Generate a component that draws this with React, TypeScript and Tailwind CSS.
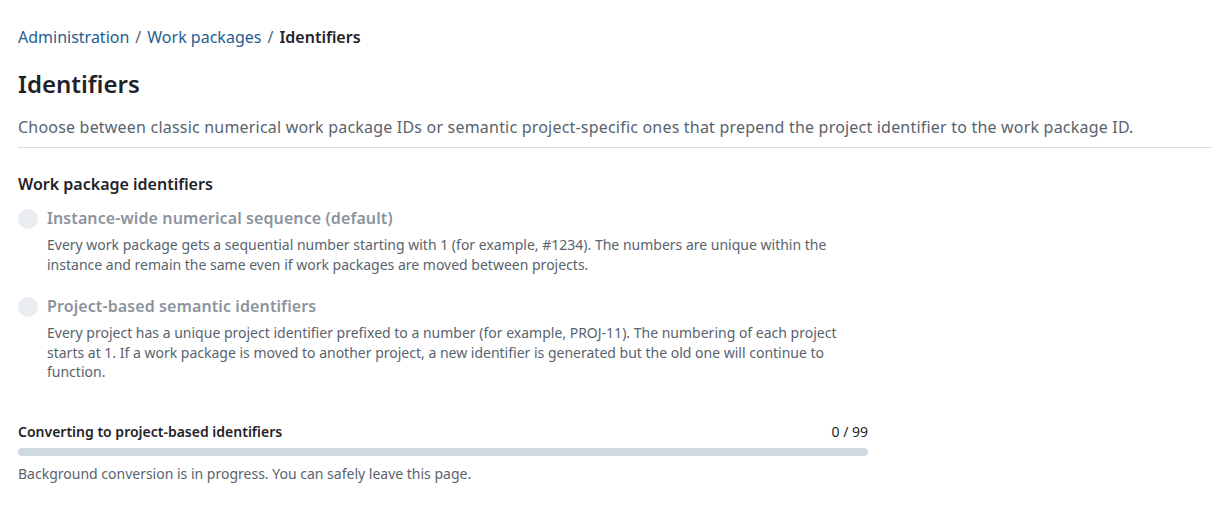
import React from "react";

function Radio({ title, children }: { title: string; children: React.ReactNode }) {
  return (
    <div className="flex gap-[9px]">
      <div className="mt-[3px] h-[20px] w-[20px] shrink-0 rounded-full bg-[#eaedf1]" />
      <div className="flex flex-col">
        <div className="text-[16px] font-semibold leading-[24px] tracking-[0.1px] text-[#8b949e]">{title}</div>
        <div className="mt-[5px] max-w-[800px] text-[14px] leading-[19.5px] text-[#59636e]">{children}</div>
      </div>
    </div>
  );
}

export default function App() {
  return (
    <div
      className="min-h-screen bg-white pl-[18px] pr-[19px] pt-[25px] text-[#1f2328]"
      style={{ fontFamily: '"Noto Sans", "Open Sans", sans-serif' }}
    >
      <nav className="flex items-center text-[16px] leading-[24px]">
        <a className="text-[#1f6092]">Administration</a>
        <span className="mx-[6px] text-[#59636e]">/</span>
        <a className="text-[#1f6092]">Work packages</a>
        <span className="mx-[6px] text-[#59636e]">/</span>
        <span className="font-semibold text-[#1f2328]">Identifiers</span>
      </nav>
      <h1 className="mt-[19px] text-[24px] font-semibold leading-[32px]">Identifiers</h1>
      <p className="mt-[15px] text-[16px] leading-[24px] tracking-[0.2px] text-[#59636e]">
        Choose between classic numerical work package IDs or semantic project-specific ones that prepend the project identifier to the work package ID.
      </p>
      <div className="mt-[8px] border-b border-[#d8dee4]" />

      <div className="max-w-[850px]">
        <h2 className="mt-[24px] text-[16px] font-semibold leading-[24px]">Work package identifiers</h2>
        <div className="mt-[10px] flex flex-col gap-[20px]">
          <Radio title="Instance-wide numerical sequence (default)">
            Every work package gets a sequential number starting with 1 (for example, #1234). The numbers are unique within the instance and remain the same even if work packages are moved between projects.
          </Radio>
          <Radio title="Project-based semantic identifiers">
            Every project has a unique project identifier prefixed to a number (for example, PROJ-11). The numbering of each project starts at 1. If a work package is moved to another project, a new identifier is generated but the old one will continue to function.
          </Radio>
        </div>

        <div className="mt-[40px]">
          <div className="flex items-center justify-between text-[14px] leading-[20px]">
            <span className="font-semibold">Converting to project-based identifiers</span>
            <span>0 / 99</span>
          </div>
          <div className="mt-[6px] h-[8px] rounded-full bg-[#d1d9e0]" />
          <p className="mt-[8px] text-[14px] leading-[20px] text-[#59636e]">
            Background conversion is in progress. You can safely leave this page.
          </p>
        </div>
      </div>
    </div>
  );
}
